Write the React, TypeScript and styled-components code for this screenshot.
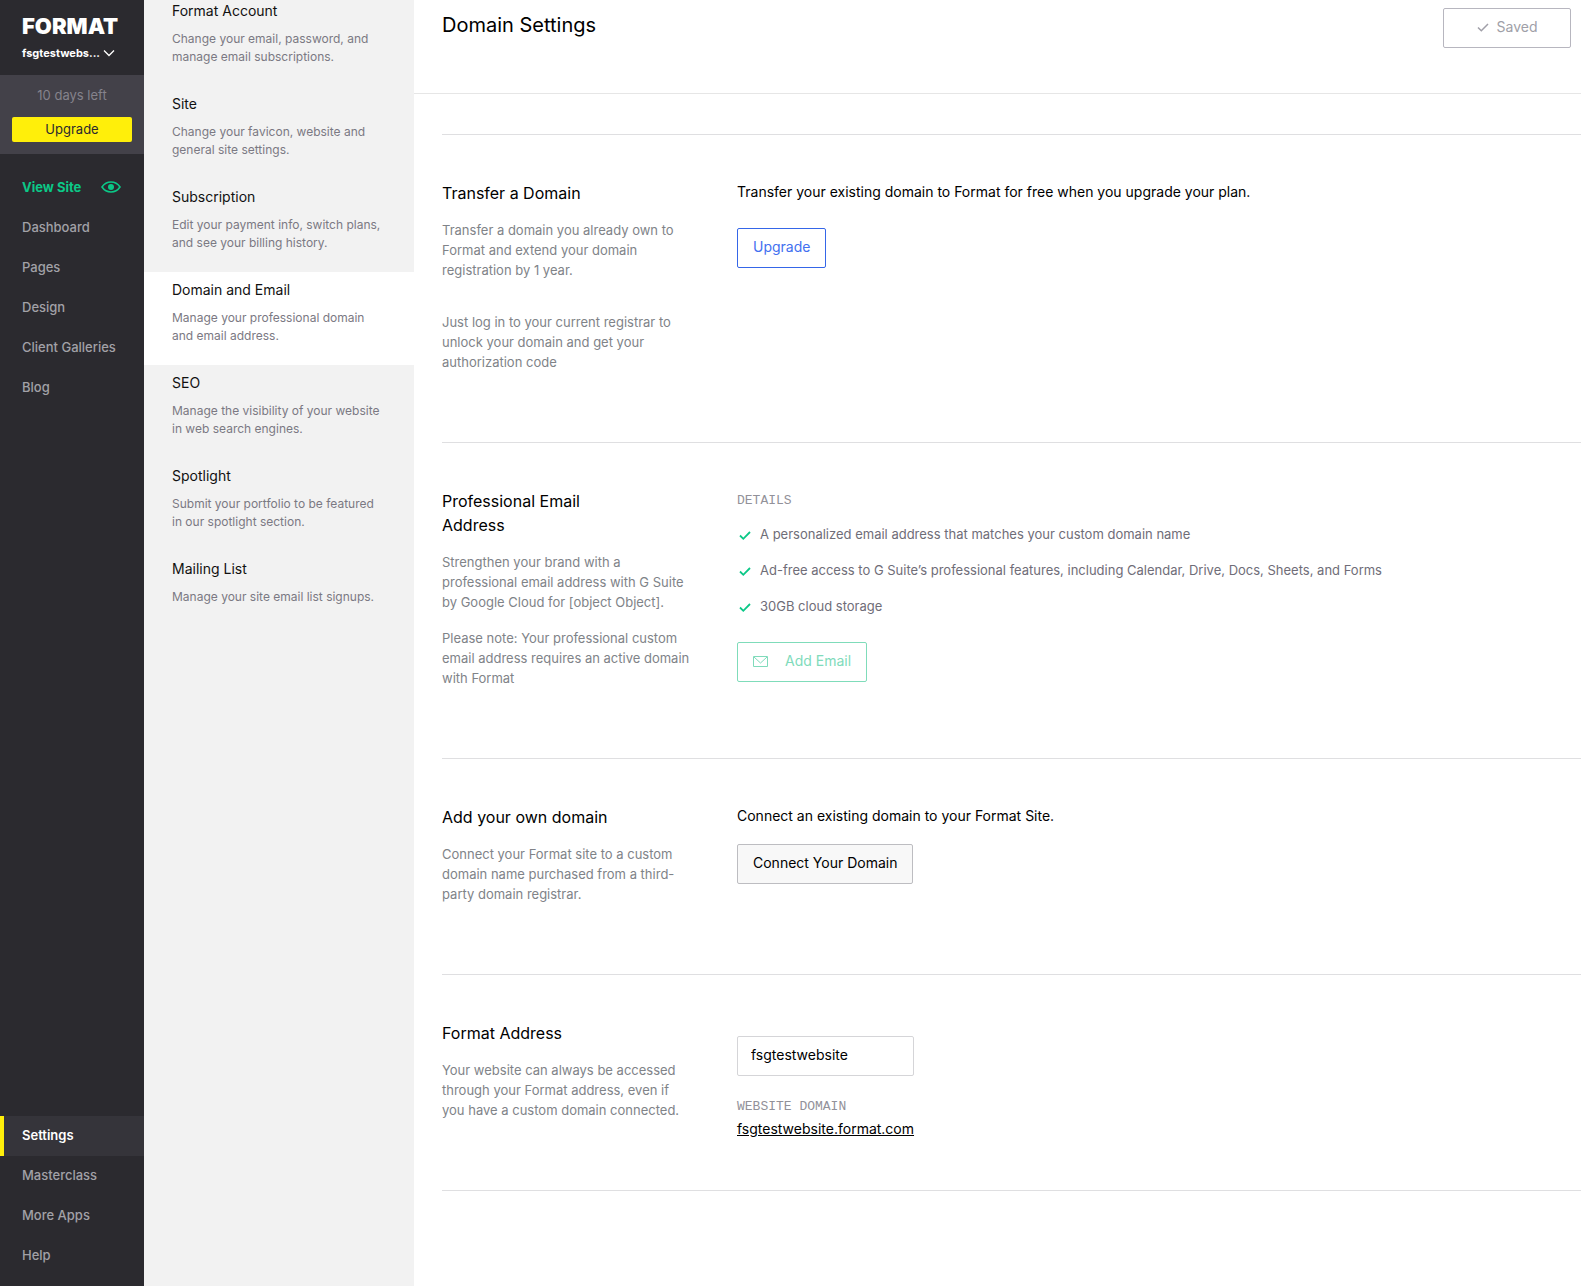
import React from "react";
import styled, { createGlobalStyle, css } from "styled-components";

const sans = `Inter, "Liberation Sans", sans-serif`;
const mono = `"Liberation Mono", monospace`;

const GlobalStyle = createGlobalStyle`
  *, *::before, *::after { box-sizing: border-box; }
  body {
    margin: 0;
    background: #fff;
    color: #000;
    font-family: ${sans};
    font-size: 14px;
    line-height: 20px;
  }
  h1, h2, p, ul { margin: 0; padding: 0; }
  ul { list-style: none; }
  a { color: inherit; text-decoration: none; }
  button, input { font: inherit; color: inherit; }
  button { cursor: pointer; }
`;

const Page = styled.div`
  display: flex;
  min-height: 100vh;
`;

/* Primary sidebar */

const Sidebar = styled.aside`
  display: flex;
  flex-direction: column;
  flex: 0 0 144px;
  padding-bottom: 10px;
  background: #2b2a2f;
  color: #a2a1a7;
`;

const Brand = styled.header`
  height: 75px;
  padding: 14px 12px 0 22px;
  color: #fff;
`;

const Logo = styled.a`
  display: block;
  font-size: 22px;
  font-weight: 900;
  line-height: 24px;
`;

const SiteSwitcher = styled.button`
  display: flex;
  align-items: center;
  gap: 3px;
  padding: 0;
  border: 0;
  background: none;
  font-size: 11px;
  font-weight: 700;
  line-height: 30px;
`;

const SiteName = styled.span`
  min-width: 78px;
  text-align: left;
  white-space: nowrap;
`;

const Trial = styled.section`
  display: flex;
  flex-direction: column;
  gap: 12px;
  height: 79px;
  padding: 10px 12px 0;
  background: #434149;
  color: #85838c;
  font-size: 13px;
  text-align: center;
`;

const TrialButton = styled.button`
  height: 25px;
  padding: 0 0 2px;
  border: 0;
  border-radius: 2px;
  background: #ffef0a;
  color: #2b2a2f;
`;

const Nav = styled.nav`
  display: flex;
  flex-direction: column;
  flex: 1;
  padding-top: 14px;
`;

const NavSpacer = styled.div`
  flex: 1;
`;

const NavLink = styled.a<{ $tone?: "site" | "active" }>`
  display: flex;
  align-items: center;
  justify-content: space-between;
  height: 40px;
  padding: 0 23px 2px 18px;
  border-left: 4px solid transparent;
  font-size: 13px;
  font-weight: 500;
  ${({ $tone }) =>
    $tone === "site" &&
    css`
      color: #0bc887;
      font-weight: 700;
    `}
  ${({ $tone }) =>
    $tone === "active" &&
    css`
      border-left-color: #ffef0a;
      background: #35343a;
      color: #fff;
      font-weight: 600;
    `}
`;

/* Settings menu */

const Menu = styled.nav`
  flex: 0 0 270px;
  overflow: hidden;
  background: #f2f2f2;
`;

const MenuList = styled.ul`
  margin-top: -7px;
`;

const MenuItem = styled.a<{ $active?: boolean }>`
  display: flex;
  flex-direction: column;
  gap: 9px;
  padding: 8px 28px 20px;
  background: ${({ $active }) => ($active ? "#fff" : "transparent")};
`;

const MenuTitle = styled.span`
  color: #111;
  font-size: 14px;
  line-height: 20px;
`;

const MenuText = styled.span`
  color: #7b7983;
  font-size: 12px;
  line-height: 18px;
`;

/* Content */

const Main = styled.main`
  flex: 1;
  min-width: 0;
`;

const TopBar = styled.header`
  display: flex;
  align-items: flex-start;
  justify-content: space-between;
  height: 94px;
  padding: 8px 10px 0 28px;
  border-bottom: 1px solid #e6e6e6;
`;

const PageTitle = styled.h1`
  font-size: 20px;
  font-weight: 400;
  line-height: 34px;
`;

const Sections = styled.div`
  margin: 40px 0 0 28px;
  border-top: 1px solid #dfdfe1;
`;

const Section = styled.section`
  display: grid;
  grid-template-columns: 250px minmax(0, 1fr);
  column-gap: 45px;
  padding: 46px 0 48px;
  border-bottom: 1px solid #dfdfe1;
`;

const SectionTitle = styled.h2`
  margin-bottom: 15px;
  padding-right: 60px;
  font-size: 16px;
  font-weight: 400;
  line-height: 24px;
`;

const Copy = styled.div<{ $gap?: number }>`
  display: flex;
  flex-direction: column;
  gap: ${({ $gap = 16 }) => $gap}px;
  padding-bottom: 22px;
  color: #808388;
  font-size: 13px;
  line-height: 20px;
`;

const Panel = styled.div<{ $gap?: number; $top?: number }>`
  display: flex;
  flex-direction: column;
  align-items: flex-start;
  gap: ${({ $gap = 0 }) => $gap}px;
  padding-top: ${({ $top = 1 }) => $top}px;
`;

const Label = styled.p`
  color: #929199;
  font-family: ${mono};
  font-size: 13px;
  line-height: 22px;
  text-transform: uppercase;
`;

const Features = styled.ul`
  display: flex;
  flex-direction: column;
  gap: 16px;
  padding: 12px 0 26px;
  color: #6f6d78;
  font-size: 13px;
`;

const Feature = styled.li`
  display: flex;
  align-items: center;
  gap: 9px;
  padding-left: 2px;

  svg {
    margin-top: 2px;
  }
`;

const variants = {
  primary: css`
    border-color: #3566e8;
    background: #fff;
    color: #4270f0;
  `,
  success: css`
    border-color: #7fdcba;
    background: #fff;
    color: #80dbbb;
  `,
  neutral: css`
    border-color: #bdbdc1;
    background: #f8f8f8;
    color: #000;
  `,
  saved: css`
    min-width: 128px;
    border-color: #b7b6bf;
    background: #fff;
    color: #a09fa8;
  `,
};

const Button = styled.button<{ $variant: keyof typeof variants; $gap?: number }>`
  display: inline-flex;
  align-items: center;
  justify-content: center;
  gap: ${({ $gap = 0 }) => $gap}px;
  height: 40px;
  padding: 0 15px 2px;
  border: 1px solid;
  border-radius: 2px;
  font-size: 14px;
  ${({ $variant }) => variants[$variant]}
`;

const Address = styled.input`
  width: 177px;
  height: 40px;
  margin-bottom: 20px;
  padding: 0 13px 3px;
  border: 1px solid #d5d5d8;
  border-radius: 2px;
  background: #fff;
  font-size: 14px;
`;

const DomainLink = styled.a`
  line-height: 22px;
  text-decoration: underline;
`;

const Check = ({ color, weight }: { color: string; weight: number }) => (
  <svg width="12" height="12" viewBox="0 0 12 12" fill="none" aria-hidden="true">
    <path d="M1 6.500 4.300 9.800 11 3" stroke={color} strokeWidth={weight} />
  </svg>
);

const Envelope = () => (
  <svg width="16" height="12" viewBox="0 0 16 12" fill="none" stroke="#80dbbb" aria-hidden="true">
    <path d="M.5 1.500h14v10H.5z" />
    <path d="m1 2 6.500 6L14 2" />
  </svg>
);

const Chevron = () => (
  <svg width="12" height="8" viewBox="0 0 12 8" fill="none" aria-hidden="true">
    <path d="m1 1.500 5 5 5-5" stroke="#fff" strokeWidth="1.300" />
  </svg>
);

const Eye = () => (
  <svg width="20" height="12" viewBox="0 0 20 12" fill="none" aria-hidden="true">
    <path
      d="M1 6C3.200 2.700 6.200 1 10 1s6.800 1.700 9 5c-2.200 3.300-5.200 5-9 5S3.200 9.300 1 6Z"
      stroke="#0bc887"
      strokeWidth="1.600"
    />
    <circle cx="10" cy="6" r="3" fill="#0bc887" />
  </svg>
);

const menu = [
  ["Format Account", "Change your email, password, and manage email subscriptions."],
  ["Site", "Change your favicon, website and general site settings."],
  ["Subscription", "Edit your payment info, switch plans, and see your billing history."],
  ["Domain and Email", "Manage your professional domain and email address."],
  ["SEO", "Manage the visibility of your website in web search engines."],
  ["Spotlight", "Submit your portfolio to be featured in our spotlight section."],
  ["Mailing List", "Manage your site email list signups."],
];

const features = [
  "A personalized email address that matches your custom domain name",
  "Ad-free access to G Suite’s professional features, including Calendar, Drive, Docs, Sheets, and Forms",
  "30GB cloud storage",
];

export default function App() {
  return (
    <>
      <GlobalStyle />
      <Page>
        <Sidebar>
          <Brand>
            <Logo href="#">FORMAT</Logo>
            <SiteSwitcher type="button">
              <SiteName>fsgtestwebs...</SiteName>
              <Chevron />
            </SiteSwitcher>
          </Brand>
          <Trial>
            <p>10 days left</p>
            <TrialButton type="button">Upgrade</TrialButton>
          </Trial>
          <Nav>
            <NavLink href="#" $tone="site">
              View Site
              <Eye />
            </NavLink>
            {["Dashboard", "Pages", "Design", "Client Galleries", "Blog"].map((name) => (
              <NavLink href="#" key={name}>
                {name}
              </NavLink>
            ))}
            <NavSpacer />
            <NavLink href="#" $tone="active">
              Settings
            </NavLink>
            {["Masterclass", "More Apps", "Help"].map((name) => (
              <NavLink href="#" key={name}>
                {name}
              </NavLink>
            ))}
          </Nav>
        </Sidebar>

        <Menu>
          <MenuList>
            {menu.map(([title, text]) => (
              <li key={title}>
                <MenuItem href="#" $active={title === "Domain and Email"}>
                  <MenuTitle>{title}</MenuTitle>
                  <MenuText>{text}</MenuText>
                </MenuItem>
              </li>
            ))}
          </MenuList>
        </Menu>

        <Main>
          <TopBar>
            <PageTitle>Domain Settings</PageTitle>
            <Button type="button" $variant="saved" $gap={8}>
              <Check color="#a09fa8" weight={1.5} />
              Saved
            </Button>
          </TopBar>

          <Sections>
            <Section>
              <div>
                <SectionTitle>Transfer a Domain</SectionTitle>
                <Copy $gap={32}>
                  <p>
                    Transfer a domain you already own to Format and extend your domain
                    registration by 1 year.
                  </p>
                  <p>
                    Just log in to your current registrar to unlock your domain and get your
                    authorization code
                  </p>
                </Copy>
              </div>
              <Panel $gap={26}>
                <p>Transfer your existing domain to Format for free when you upgrade your plan.</p>
                <Button type="button" $variant="primary">
                  Upgrade
                </Button>
              </Panel>
            </Section>

            <Section>
              <div>
                <SectionTitle>Professional Email Address</SectionTitle>
                <Copy>
                  <p>
                    Strengthen your brand with a professional email address with G Suite by
                    Google Cloud for [object Object].
                  </p>
                  <p>
                    Please note: Your professional custom email address requires an active
                    domain with Format
                  </p>
                </Copy>
              </div>
              <Panel>
                <Label>Details</Label>
                <Features>
                  {features.map((feature) => (
                    <Feature key={feature}>
                      <Check color="#0bc887" weight={1.8} />
                      {feature}
                    </Feature>
                  ))}
                </Features>
                <Button type="button" $variant="success" $gap={16}>
                  <Envelope />
                  Add Email
                </Button>
              </Panel>
            </Section>

            <Section>
              <div>
                <SectionTitle>Add your own domain</SectionTitle>
                <Copy>
                  <p>
                    Connect your Format site to a custom domain name purchased from a
                    third-party domain registrar.
                  </p>
                </Copy>
              </div>
              <Panel $gap={18}>
                <p>Connect an existing domain to your Format Site.</p>
                <Button type="button" $variant="neutral">
                  Connect Your Domain
                </Button>
              </Panel>
            </Section>

            <Section>
              <div>
                <SectionTitle>Format Address</SectionTitle>
                <Copy>
                  <p>
                    Your website can always be accessed through your Format address, even if
                    you have a custom domain connected.
                  </p>
                </Copy>
              </div>
              <Panel $top={15}>
                <Address aria-label="Format address" defaultValue="fsgtestwebsite" />
                <Label>Website Domain</Label>
                <DomainLink href="#">fsgtestwebsite.format.com</DomainLink>
              </Panel>
            </Section>
          </Sections>
        </Main>
      </Page>
    </>
  );
}
